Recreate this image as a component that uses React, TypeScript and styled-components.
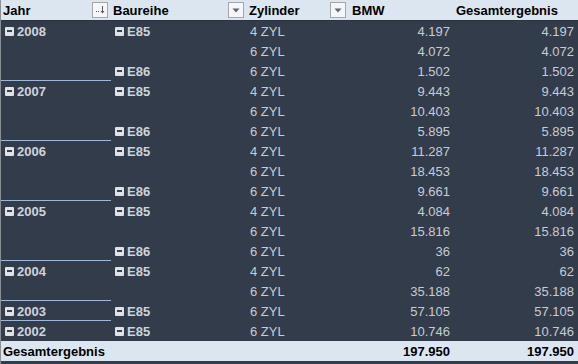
import React from "react";
import styled, { createGlobalStyle } from "styled-components";

const GlobalStyle = createGlobalStyle`
  html, body {
    margin: 0;
    padding: 0;
    background: #333c4b;
  }
  body {
    font-family: "Liberation Sans", Arial, sans-serif;
    font-size: 13px;
  }
`;

const COLS = "110px 136px 102px 104px 124px";

const Sheet = styled.div`
  width: 578px;
  height: 364px;
  background: #333c4b;
  border-left: 1px solid #8a8f96;
  box-sizing: border-box;
  overflow: hidden;
`;

const HeaderRow = styled.div`
  display: grid;
  grid-template-columns: ${COLS};
  height: 20px;
  background: #dce6f1;
  border-bottom: 1px solid #2a3240;
`;

const HeaderCell = styled.div<{ $plain?: boolean }>`
  display: flex;
  align-items: center;
  justify-content: ${({ $plain }) => ($plain ? "flex-start" : "space-between")};
  padding: 0 2px 0 ${({ $plain }) => ($plain ? "3px" : "2px")};
  font-weight: bold;
  color: #000;
  white-space: nowrap;
`;

const FilterButton = styled.span`
  display: flex;
  align-items: center;
  justify-content: center;
  width: 14px;
  height: 14px;
  border: 1px solid #a6a6a6;
  background: #f4f6f9;
  color: #555;
  margin-right: 1px;
`;

const Row = styled.div`
  display: grid;
  grid-template-columns: ${COLS};
  height: 20px;
`;

const LabelCell = styled.div<{ $line?: boolean }>`
  display: flex;
  align-items: center;
  gap: 2px;
  padding-left: 4px;
  box-sizing: border-box;
  color: #cfd4db;
  font-weight: bold;
  border-top: 1px solid ${({ $line }) => ($line ? "#9fb7d9" : "transparent")};
  margin-top: -1px;
  height: 21px;
`;

const ZylCell = styled.div`
  display: flex;
  align-items: center;
  padding-left: 3px;
  color: #c7ccd4;
`;

const ValueCell = styled.div`
  display: flex;
  align-items: center;
  justify-content: flex-end;
  padding-right: 3px;
  color: #c7ccd4;
`;

const TotalRow = styled.div`
  display: grid;
  grid-template-columns: ${COLS};
  height: 20px;
  background: #dce6f1;
  font-weight: bold;
  color: #000;
`;

const TotalLabel = styled.div`
  grid-column: 1 / 4;
  display: flex;
  align-items: center;
  padding-left: 2px;
`;

const TotalValue = styled.div`
  display: flex;
  align-items: center;
  justify-content: flex-end;
  padding-right: 3px;
`;

const Minus = styled.span`
  display: inline-flex;
  align-items: center;
  justify-content: center;
  width: 9px;
  height: 9px;
  background: #dfe2e6;
  border-radius: 1px;
  margin-right: 1px;

  &::after {
    content: "";
    width: 5px;
    height: 2px;
    background: #3a4250;
  }
`;

const SortIcon = () => (
  <svg width="10" height="10" viewBox="0 0 10 10">
    <rect x="1" y="6" width="1" height="1" fill="#555" />
    <rect x="3" y="6" width="1" height="1" fill="#555" />
    <rect x="7" y="1" width="1" height="7" fill="#555" />
    <path d="M5.5 6 L7.5 8.5 L9.5 6 Z" fill="#555" />
  </svg>
);

const ArrowIcon = () => (
  <svg width="8" height="5" viewBox="0 0 8 5">
    <path d="M0.5 0.5 L7.5 0.5 L4 4.5 Z" fill="#666" />
  </svg>
);

type Item = {
  year?: string;
  series?: string;
  zyl: string;
  value: string;
  line?: boolean;
};

const rows: Item[] = [
  { year: "2008", series: "E85", zyl: "4 ZYL", value: "4.197" },
  { zyl: "6 ZYL", value: "4.072" },
  { series: "E86", zyl: "6 ZYL", value: "1.502" },
  { year: "2007", series: "E85", zyl: "4 ZYL", value: "9.443", line: true },
  { zyl: "6 ZYL", value: "10.403" },
  { series: "E86", zyl: "6 ZYL", value: "5.895" },
  { year: "2006", series: "E85", zyl: "4 ZYL", value: "11.287", line: true },
  { zyl: "6 ZYL", value: "18.453" },
  { series: "E86", zyl: "6 ZYL", value: "9.661" },
  { year: "2005", series: "E85", zyl: "4 ZYL", value: "4.084", line: true },
  { zyl: "6 ZYL", value: "15.816" },
  { series: "E86", zyl: "6 ZYL", value: "36" },
  { year: "2004", series: "E85", zyl: "4 ZYL", value: "62", line: true },
  { zyl: "6 ZYL", value: "35.188" },
  { year: "2003", series: "E85", zyl: "6 ZYL", value: "57.105", line: true },
  { year: "2002", series: "E85", zyl: "6 ZYL", value: "10.746", line: true },
];

const App: React.FC = () => (
  <>
    <GlobalStyle />
    <Sheet>
      <HeaderRow>
        <HeaderCell>
          Jahr
          <FilterButton>
            <SortIcon />
          </FilterButton>
        </HeaderCell>
        <HeaderCell>
          Baureihe
          <FilterButton>
            <ArrowIcon />
          </FilterButton>
        </HeaderCell>
        <HeaderCell>
          Zylinder
          <FilterButton>
            <ArrowIcon />
          </FilterButton>
        </HeaderCell>
        <HeaderCell $plain>BMW</HeaderCell>
        <HeaderCell $plain>Gesamtergebnis</HeaderCell>
      </HeaderRow>
      {rows.map((r, i) => (
        <Row key={i}>
          <LabelCell $line={r.line}>
            {r.year && (
              <>
                <Minus />
                {r.year}
              </>
            )}
          </LabelCell>
          <LabelCell>
            {r.series && (
              <>
                <Minus />
                {r.series}
              </>
            )}
          </LabelCell>
          <ZylCell>{r.zyl}</ZylCell>
          <ValueCell>{r.value}</ValueCell>
          <ValueCell>{r.value}</ValueCell>
        </Row>
      ))}
      <TotalRow>
        <TotalLabel>Gesamtergebnis</TotalLabel>
        <TotalValue>197.950</TotalValue>
        <TotalValue>197.950</TotalValue>
      </TotalRow>
    </Sheet>
  </>
);

export default App;
